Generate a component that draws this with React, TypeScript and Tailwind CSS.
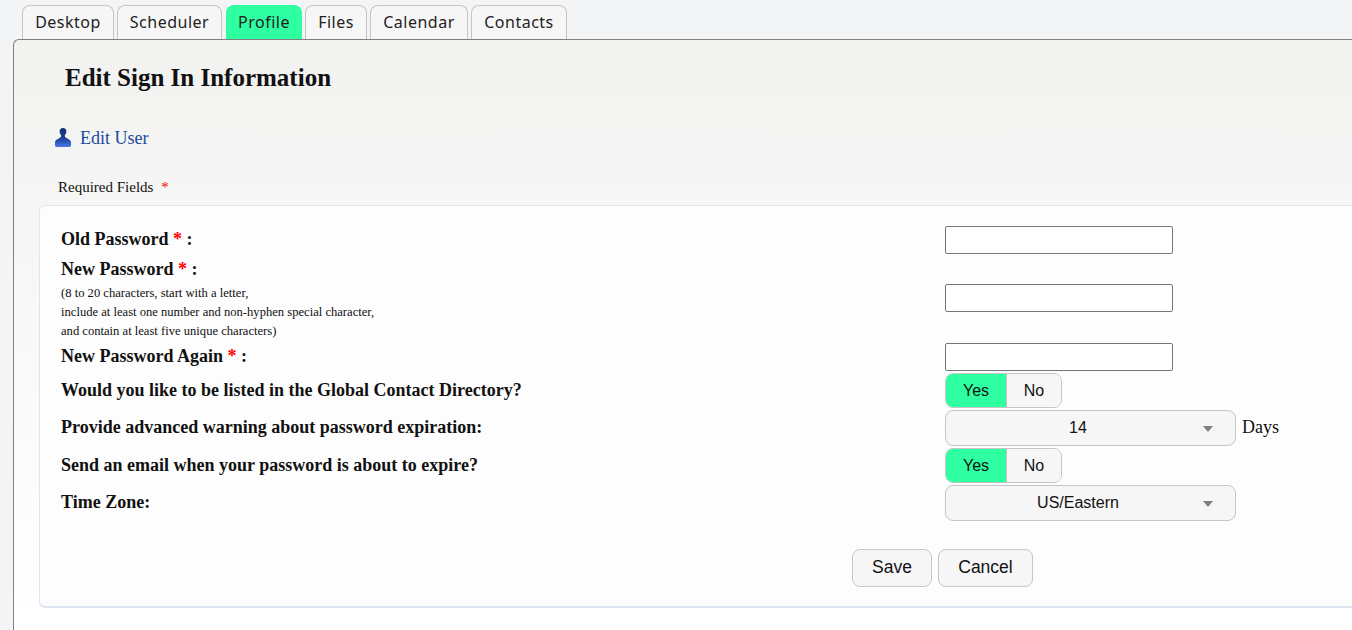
const tabs = [
  { name: 'Desktop', width: 'w-[92px]' },
  { name: 'Scheduler', width: 'w-[105px]' },
  { name: 'Profile', width: 'w-[76px]' },
  { name: 'Files', width: 'w-[62px]' },
  { name: 'Calendar', width: 'w-[98px]' },
  { name: 'Contacts', width: 'w-[96px]' },
];

function Req() {
  return <span className="text-[#ff0000]">*</span>;
}

function Toggle() {
  return (
    <div className="flex h-[35px] w-[117px] overflow-hidden rounded-[8px] border border-[#c5c5c5] font-['Liberation_Sans',sans-serif] text-[16px] text-[#111]">
      <div className="flex w-[61px] items-center justify-center border-r border-[#c5c5c5] bg-[#2effa0]">Yes</div>
      <div className="flex flex-1 items-center justify-center bg-[#f6f6f6]">No</div>
    </div>
  );
}

function Select({ value }: { value: string }) {
  return (
    <div className="relative flex h-[36px] w-[291px] items-center justify-center rounded-[8px] border border-[#c5c5c5] bg-[#f6f6f6] pr-[25px] font-['Liberation_Sans',sans-serif] text-[16px] text-[#111]">
      {value}
      <svg className="absolute left-[257px] top-[15px]" width="10" height="6" viewBox="0 0 10 6">
        <path d="M0 0h10L5 6z" fill="#808080" />
      </svg>
    </div>
  );
}

function TextBox() {
  return <input type="password" className="h-[28px] w-[228px] rounded-[2px] border border-[#767676] bg-white" />;
}

function Label({ children }: { children: React.ReactNode }) {
  return <div className="text-[18px] font-bold text-[#111]">{children}</div>;
}

export default function App() {
  return (
    <div className="h-[630px] w-[1352px] overflow-hidden bg-[#f3f4f6] pl-[13px] font-['Liberation_Serif',serif]">
      <div className="flex h-[39px] items-end gap-[3px] pl-[9px]">
        {tabs.map((t) =>
          t.name === 'Profile' ? (
            <div
              key={t.name}
              className={`ml-[1px] flex h-[34px] items-center justify-center rounded-t-[8px] bg-[#2effa0] font-['Noto_Sans',sans-serif] text-[16px] tracking-[0.5px] text-[#222] ${t.width}`}
            >
              {t.name}
            </div>
          ) : (
            <div
              key={t.name}
              className={`flex h-[34px] items-center justify-center rounded-t-[8px] border border-b-0 border-[#c5c5c5] bg-[#f6f6f6] pb-[2px] font-['Noto_Sans',sans-serif] text-[16px] tracking-[0.5px] text-[#222] ${t.width}`}
            >
              {t.name}
            </div>
          ),
        )}
      </div>
      <div className="h-[591px] w-[1400px] rounded-tl-[6px] border-l border-t border-[#808080] bg-gradient-to-b from-[#f2f2f0] via-[#f6f6f6] via-30% to-white">
        <h1 className="pl-[51px] pt-[23px] text-[25px] leading-[30px] font-bold text-[#111]">Edit Sign In Information</h1>
        <div className="mt-[33px] flex h-[24px] items-center pl-[39px]">
          <svg width="20" height="22" viewBox="0 0 20 22">
            <defs>
              <linearGradient id="u" x1="0" y1="0" x2="0" y2="1">
                <stop offset="0" stopColor="#12306f" />
                <stop offset="0.55" stopColor="#1c3f98" />
                <stop offset="1" stopColor="#4a7bea" />
              </linearGradient>
            </defs>
            <path
              d="M10 1c2.200 0 3.400 1.500 3.400 3.400 0 1.500-.7 2.500-1.300 3.300-.5.8-.3 2 .5 2.700l3 1.800c1.300.7 2.400 1.600 2.400 3.400v3c0 1-.7 1.400-1.800 1.400H3.800c-1.100 0-1.800-.4-1.800-1.400v-3c0-1.800 1.100-2.700 2.400-3.400l3-1.800c.8-.7 1-1.900.5-2.700-.6-.8-1.300-1.800-1.300-3.300C6.600 2.500 7.800 1 10 1z"
              fill="url(#u)"
            />
          </svg>
          <span className="ml-[7px] text-[18px] text-[#1a4b9c]">Edit User</span>
        </div>
        <div className="mt-[27px] pl-[44px] text-[15px] leading-[20px] text-[#111]">
          Required Fields <span className="ml-[4px] text-[#ff0000]">*</span>
        </div>
        <div className="ml-[25px] mt-[8px] h-[403px] w-[1340px] rounded-[6px] border border-b-2 border-[#dce6f2] bg-[#fdfdfd] pl-[21px] pt-[20px]">
          <div className="grid grid-cols-[884px_1fr]">
            <div className="flex h-[28px] items-center pb-[1px]">
              <Label>Old Password <Req /> :</Label>
            </div>
            <TextBox />

            <div className="mt-[2px] flex h-[82px] flex-col">
              <Label>New Password <Req /> :</Label>
              <div className="mt-[1px] text-[12.6px] leading-[19px] text-[#111]">
                (8 to 20 characters, start with a letter,
                <br />
                include at least one number and non-hyphen special character,
                <br />
                and contain at least five unique characters)
              </div>
            </div>
            <div className="mt-[3px] flex h-[81px] items-center">
              <TextBox />
            </div>

            <div className="mt-[5px] flex h-[28px] items-center pb-[1px]">
              <Label>New Password Again <Req /> :</Label>
            </div>
            <div className="mt-[5px]">
              <TextBox />
            </div>

            <div className="mt-[2px] flex h-[35px] items-center">
              <Label>Would you like to be listed in the Global Contact Directory?</Label>
            </div>
            <div className="mt-[2px]">
              <Toggle />
            </div>

            <div className="mt-[2px] flex h-[36px] items-center pb-[1px]">
              <Label>Provide advanced warning about password expiration:</Label>
            </div>
            <div className="mt-[2px] flex items-center gap-[6px]">
              <Select value="14" />
              <span className="pb-[1px] text-[18px] text-[#111]">Days</span>
            </div>

            <div className="mt-[2px] flex h-[35px] items-center">
              <Label>Send an email when your password is about to expire?</Label>
            </div>
            <div className="mt-[2px]">
              <Toggle />
            </div>

            <div className="mt-[2px] flex h-[36px] items-center pb-[1px]">
              <Label>Time Zone:</Label>
            </div>
            <div className="mt-[2px]">
              <Select value="US/Eastern" />
            </div>
          </div>
          <div className="ml-[791px] mt-[28px] flex gap-[6px] font-['Liberation_Sans',sans-serif] text-[17.5px] text-[#111]">
            <button className="h-[38px] w-[80px] rounded-[8px] border border-[#c5c5c5] bg-[#f6f6f6] pb-[1px]">Save</button>
            <button className="h-[38px] w-[95px] rounded-[8px] border border-[#c5c5c5] bg-[#f6f6f6] pb-[1px]">Cancel</button>
          </div>
        </div>
      </div>
    </div>
  );
}
